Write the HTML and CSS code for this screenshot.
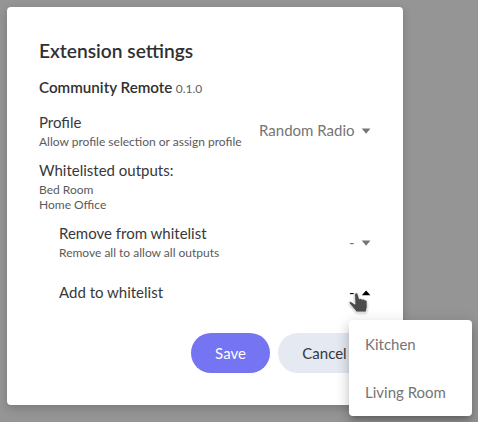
FILE: index.html
```html
<!DOCTYPE html>
<html lang="en">
<head>
<meta charset="utf-8">
<title>Extension settings</title>
<link rel="stylesheet" href="styles.css">
</head>
<body>
<main class="dialog">
  <h1 class="title">Extension settings</h1>
  <h2 class="name">Community Remote <span class="version">0.1.0</span></h2>
  <section class="row profile">
    <div>
      <div class="label">Profile</div>
      <div class="hint">Allow profile selection or assign profile</div>
    </div>
    <div class="select"><span>Random Radio</span><svg class="caret" viewBox="0 0 10 6"><path d="M.8.5h8.6L5.1 5.7z"/></svg></div>
  </section>
  <section class="outputs">
    <div class="label">Whitelisted outputs:</div>
    <div class="hint">Bed Room</div>
    <div class="hint">Home Office</div>
  </section>
  <section class="row nested remove">
    <div>
      <div class="label">Remove from whitelist</div>
      <div class="hint">Remove all to allow all outputs</div>
    </div>
    <div class="select"><span>-</span><svg class="caret" viewBox="0 0 10 6"><path d="M.8.5h8.6L5.1 5.7z"/></svg></div>
  </section>
  <section class="row nested add">
    <div class="label">Add to whitelist</div>
    <div class="select open"><span>-</span><svg class="caret" viewBox="0 0 10 6"><path d="M.8 5.2h8.6L5.1.4z"/></svg></div>
  </section>
  <footer class="actions">
    <button class="button save">Save</button>
    <button class="button cancel">Cancel</button>
  </footer>
</main>
<div class="menu">
  <div class="item">Kitchen</div>
  <div class="item">Living Room</div>
</div>
<svg class="pointer" viewBox="0 0 22 24"><path d="M7.3 3.3C8.4 2.5 9.5 3 9.9 4.2l1.5 4.7 1.2-.4 1.6.8 1.4-.2 1.2.9 1.5.1.7 1.1.2 5.8-1.1 5H8.5L5.4 18.2 1.5 13.5c-.7-1.3.3-2.4 1.6-1.8l3.9 2.5L6.6 5.3c-.1-.9.1-1.6.7-2z"/></svg>
</body>
</html>
```
FILE: styles.css
```css
* { box-sizing: border-box; }
body {
  margin: 0;
  width: 478px;
  height: 422px;
  padding: 7px;
  overflow: hidden;
  background: #959595;
  color: #38383b;
  font-family: Lato, sans-serif;
  font-size: 15px;
}
.dialog {
  width: 396px;
  height: 398px;
  padding: 32px;
  border-radius: 4px;
  background: #fff;
  box-shadow: 0 3px 10px rgba(0, 0, 0, .2);
}
.title { margin: 0; font-size: 19.2px; line-height: 24px; font-weight: 600; color: #303033; }
.name { margin: 14px 0 0; font-size: 15.2px; line-height: 20px; font-weight: 600; color: #303033; }
.version { margin-left: -.5px; font-size: 12px; font-weight: 400; color: #606060; }
.label { line-height: 20px; }
.hint { font-size: 12px; line-height: 15px; color: #5a5a5c; }
.row { display: flex; justify-content: space-between; align-items: center; }
.profile { margin-top: 13px; height: 37px; }
.profile .hint, .remove .hint { margin-top: 2px; }
.outputs { margin-top: 11px; }
.outputs .label { margin-bottom: 2px; }
.nested { padding-left: 20px; }
.remove { margin-top: 11px; height: 37px; }
.add { margin-top: 22px; height: 20px; }
.select { display: flex; align-items: center; gap: 6.5px; color: #757575; line-height: 20px; }
.profile .select { margin-top: -2px; }
.caret { width: 10px; height: 6px; margin-top: 3px; fill: currentColor; }
.open { color: #000; }
.open .caret { margin-top: 2px; }
.actions { display: flex; gap: 8px; margin: 31px 0 0 152px; }
.button {
  flex: none;
  height: 40px;
  padding: 0 24px;
  border: 0;
  border-radius: 20px;
  font: inherit;
}
.save { width: 79px; color: #fff; background: #7574f3; }
.cancel { width: 93px; color: #38383b; background: #e4e9f2; }
.menu {
  position: absolute;
  left: 349px;
  top: 320px;
  width: 123px;
  height: 96px;
  border-radius: 4px;
  background: #fff;
  color: #757575;
  box-shadow: 0 5px 5px -3px rgba(0, 0, 0, .2), 0 8px 10px 1px rgba(0, 0, 0, .1), 0 3px 14px 2px rgba(0, 0, 0, .12);
}
.item { height: 48px; padding-left: 16px; line-height: 48px; }
.pointer {
  position: absolute;
  left: 348px;
  top: 290px;
  width: 22px;
  height: 24px;
  fill: #4b4b4b;
  stroke: #fff;
  stroke-width: .7;
  filter: drop-shadow(0 1px 1px rgba(0, 0, 0, .25));
}
```
